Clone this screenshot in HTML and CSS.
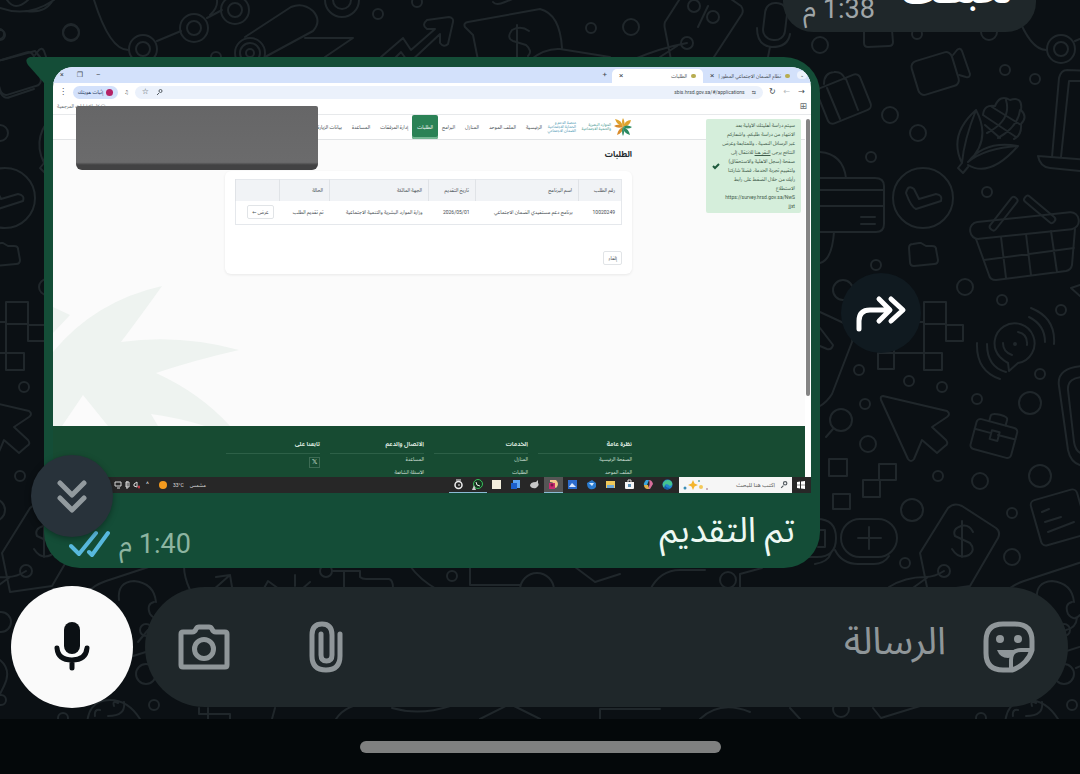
FILE: index.html
```html
<!DOCTYPE html>
<html lang="ar" dir="rtl">
<head>
<meta charset="utf-8">
<meta name="viewport" content="width=device-width, initial-scale=1">
<title>محادثة</title>
<link rel="stylesheet" href="styles.css">
</head>
<body>
<div class="app">
<main class="chat">
<svg class="wallpaper" aria-hidden="true">
<defs>
<g id="doodles">
<!-- nodes, camera, bag, laptop -->
<path d="M1012 0Q1028 51 1047 50M1075 41L1099 31M1125 18L1140 10M1135 0Q1136 8 1128 15"/>
<circle cx="1061" cy="49" r="14"/><circle cx="1061" cy="49" r="7"/>
<circle cx="1112" cy="28" r="14"/><circle cx="1112" cy="28" r="7"/>
<circle cx="1153" cy="10" r="14"/><circle cx="1153" cy="10" r="7"/>
<circle cx="989" cy="32" r="8"/><circle cx="917" cy="34" r="5"/><circle cx="820" cy="45" r="8"/>
<path d="M864 30V43Q864 47 868 47L889 46Q893 46 893 42L892 30"/>
<rect x="914" y="56" width="42" height="35" rx="6" transform="rotate(-17 935 73)"/>
<path d="M953 55L957 50Q960 47 962 51L970 74Q970 78 966 77L959 75"/>
<rect x="821" y="80" width="46" height="38" rx="5" transform="rotate(-22 844 99)"/>
<path d="M827 88L840 119M846 79L858 110M824 84Q824 73 834 72Q842 71 845 79"/>
<circle cx="890" cy="115" r="8"/><circle cx="918" cy="133" r="8"/><circle cx="1005" cy="70" r="5"/><circle cx="1035" cy="79" r="5"/><circle cx="871" cy="157" r="5"/><circle cx="987" cy="192" r="5"/>
<path d="M1090 71L1067 70Q1061 70 1059 78L1052 157M1061 157L1069 81H1090M1038 156L1090 160M1038 156Q1040 167 1050 168L1090 172"/>
<path d="M976 110Q948 135 962 163Q964 140 976 110Q992 140 968 162M962 163L958 168L963 173L968 167M968 165Q990 178 1018 146Q985 140 968 162M968 162Q985 148 1018 146"/>
<path d="M983 115Q984 104 995 106Q1000 94 1010 100Q1023 96 1021 110Q1028 117 1021 124Q1022 135 1014 139M983 115L1016 137M992 107L1021 125M987 133Q1012 120 1006 100M998 138Q1018 127 1020 110M985 125L1000 138"/>
<!-- watch, card, folder, basket -->
<circle cx="923" cy="198" r="30"/>
<path d="M906 193Q908 184 914 189L919 199L936 194Q943 195 941 201L916 209Q911 207 906 193"/>
<path d="M790 178H875Q884 178 884 186V224Q884 232 876 232H790M790 190H884M790 206H884M861 217H875M861 224H875M820 152Q843 154 846 178M834 232Q832 260 820 263"/>
<path d="M909 248Q909 244 913 244L919 243L921 243L926 246H932Q936 246 936 249L938 260Q938 264 934 264L914 266Q910 266 910 262Z"/>
<circle cx="876" cy="265" r="5"/><circle cx="843" cy="290" r="10"/><path d="M848 299L854 309"/>
<circle cx="965" cy="287" r="8"/><circle cx="1002" cy="300" r="5"/><circle cx="1061" cy="310" r="5"/>
<rect x="970" y="217" width="109" height="17" rx="8" transform="rotate(-6 1025 226)"/>
<path d="M976 239L989 275Q990 280 996 280L1066 271Q1071 270 1072 265L1075 229M1001 237L1006 278M1026 234L1031 275M1051 231L1057 272M984 260L1074 248"/>
<rect x="984" y="210" width="40" height="7" rx="3" transform="rotate(-52 1004 214)"/>
<rect x="1021" y="206" width="38" height="7" rx="3" transform="rotate(40 1040 209)"/>
<path d="M1080 285L1071 288L1080 296"/>
<!-- squares and sonar -->
<path d="M924 302H946V324H924ZM946 325H963V341H946ZM924 353H942V370H924ZM878 353H894V369H878ZM893 322H924M894 322V353H924V324"/>
<path d="M1008 363L1009 371L1018 363A20 20 0 1 0 1000 357Q1004 361 1008 363"/>
<circle cx="1015" cy="344" r="1"/><path d="M1018 332Q1028 334 1027 345M1003 343Q1003 352 1012 355M1029 317Q1045 325 1045 342M1031 308Q1056 318 1054 344M987 344Q987 367 1006 372M977 343Q976 371 1000 379"/>
<circle cx="859" cy="370" r="5"/><circle cx="909" cy="381" r="5"/><circle cx="942" cy="387" r="5"/><circle cx="977" cy="399" r="5"/><circle cx="865" cy="404" r="5"/><circle cx="1040" cy="374" r="5"/><circle cx="1030" cy="403" r="11"/><circle cx="841" cy="420" r="11"/><path d="M833 429L826 437"/>
<path d="M820 312L848 325Q854 330 852 342L832 394Q827 402 820 406M820 328L833 345Q832 350 827 349L820 346"/>
<path d="M883 396L947 411Q951 414 947 417L932 427L946 440Q949 444 945 446L937 453L922 440L914 459Q911 463 908 459L881 400Q880 396 883 396Z"/>
<g transform="rotate(15 994 438)"><rect x="973" y="423" width="42" height="31" rx="4"/><path d="M985 423V417Q986 414 994 414Q1002 414 1002 417V423M973 434H990M997 434H1015M990 431H998V440H990Z"/></g>
<path d="M1085 366Q1056 367 1059 386L1068 450Q1071 465 1085 466M1085 377Q1067 377 1068 390L1074 442Q1076 454 1085 454"/>
<!-- tags, pills, paper -->
<circle cx="868" cy="444" r="8"/><circle cx="938" cy="476" r="5"/><circle cx="980" cy="481" r="8"/><circle cx="1040" cy="476" r="11"/><circle cx="912" cy="510" r="11"/><circle cx="1012" cy="513" r="5"/><circle cx="1012" cy="557" r="8"/><circle cx="905" cy="563" r="5"/>
<path d="M829 459H847V476H829ZM879 464H896V480H879ZM863 480H880V497H863ZM833 494H850V509H833Z"/>
<rect x="841" y="519" width="56" height="38" rx="19"/><path d="M869 527V549M858 538H881M835 550Q842 564 858 564H874Q884 564 889 556"/>
<path d="M800 519H817Q836 519 836 538Q836 557 817 557H800M815 564Q828 562 831 553M818 530H825V547H818"/>
<path d="M948 508Q954 502 962 506L996 528Q1001 532 998 538L970 586L928 592L920 553ZM889 587Q905 577 925 577Q935 577 944 571M928 577L910 590"/>
<circle cx="944" cy="571" r="6"/><path d="M973 532Q969 524 961 526Q952 529 955 536L970 543Q976 550 969 555Q959 560 952 549M962 521V557"/>
<rect x="1035" y="494" width="48" height="47" rx="5" transform="rotate(-16 1059 517)"/><path d="M1042 512L1049 509M1045 522L1061 517M1048 532L1074 522"/>
<path d="M1100 556L1024 581Q1010 586 1007 592M1037 600Q1035 582 1052 581Q1072 583 1074 602M1072 602Q1064 604 1068 614Q1074 622 1080 615M1077 618Q1076 628 1066 630L1056 642M1045 658L1095 642M1076 668L1085 664"/>
<circle cx="1064" cy="630" r="6"/><circle cx="1064" cy="674" r="10"/><circle cx="919" cy="622" r="10"/><circle cx="1072" cy="705" r="5"/>
<path d="M918 660Q930 670 922 686L915 700M1005 730Q1004 700 1028 700Q1046 700 1058 719M1013 716Q1012 709 1018 710M1032 706Q1030 700 1036 703M1026 716Q1044 716 1042 702"/><circle cx="981" cy="718" r="5"/><circle cx="919" cy="700" r="5"/><circle cx="841" cy="709" r="8"/>
</g>
</defs>
<g class="doodle-lines">
<use href="#doodles"/><use href="#doodles" x="-918"/>
<path d="M0 8Q28 18 54 0M26 11Q45 14 53 0M7 0Q15 12 28 0"/>
<circle cx="71" cy="33" r="8"/><circle cx="0" cy="35" r="5"/>
<path d="M2 60L35 51L40 57M0 92Q4 100 10 97L34 89"/>
<path d="M245 37L291 7Q303 2 313 11Q322 21 313 31L265 57M305 38H353L325 57"/><circle cx="250" cy="53" r="15"/><circle cx="250" cy="53" r="10"/><circle cx="250" cy="53" r="4"/>
<circle cx="342" cy="0" r="17"/><circle cx="342" cy="0" r="9"/><circle cx="378" cy="14" r="5"/><circle cx="417" cy="2" r="5"/><circle cx="216" cy="57" r="5"/>
<path d="M381 57L403 38L411 50L435 29L427 29Q421 25 427 20L449 17Q454 18 453 22L448 44Q444 48 440 43L440 34L409 63L401 52L393 60"/>
<path d="M478 60L473 35L465 27Q463 23 468 22L540 9M493 2Q496 6 505 2L520 -4M540 9Q560 14 562 48M530 60Q545 48 560 49L610 57"/>
<path d="M529 31Q521 25 512 30Q506 38 513 41L526 45Q533 51 528 56M517 25V58"/>
<circle cx="591" cy="28" r="5"/><circle cx="631" cy="27" r="8"/>
<path d="M681 -3L665 22Q664 25 665 29L671 60M728 -3L741 6Q744 10 742 14L712 60M632 60Q660 48 687 43M698 27L708 6M660 57L677 46"/><circle cx="694" cy="6" r="6"/><circle cx="713" cy="17" r="6"/><circle cx="687" cy="43" r="6"/>
<rect x="764" y="3" width="22" height="37" rx="10" transform="rotate(7 775 22)"/><path d="M757 28Q757 46 772 47Q788 47 790 34M770 47L768 57"/>
<path d="M184 566Q184 577 190 590M213 590L230 575L216 577M230 575L232 587M263 590L268 581L279 589M295 575V586M310 582L302 589M332 571H360V577Q362 579 366 579H389Q393 580 393 588M344 571V590M410 566Q420 580 438 590M470 566V585H520M520 590A17 17 0 0 1 554 590M575 567L595 582L620 574M650 590Q660 570 680 570H705M740 590V574L762 568"/><circle cx="326" cy="571" r="6"/><circle cx="452" cy="576" r="5"/><circle cx="728" cy="580" r="8"/>
<path d="M199 708V714H230V719M208 708V719M275 708L272 719M336 719Q346 704 370 703M392 708Q420 716 450 706M480 719L510 704L540 719M600 719V709H660M700 719Q720 700 750 712M790 708L800 719M873 708L881 718L920 706"/>
</g>
</svg>

<article class="bubble-in">
<p class="in-text">لحبطت</p>
<time class="time">1:38 م</time>
</article>

<div class="row-out">
<button class="forward" type="button" aria-label="إعادة توجيه">
<svg width="52" height="40" viewBox="0 0 52 40"><path d="M4 36V28Q4 17 15 17H34M24 6L35 17L24 28M36 6L48 17L36 28" fill="none" stroke="#fff" stroke-width="5" stroke-linecap="round" stroke-linejoin="round"/></svg>
</button>
<article class="bubble-out">
<svg class="tail" width="30" height="28" viewBox="0 0 30 28" aria-hidden="true"><path d="M30 0H4Q-2 2 2 8L18 26L30 28Z" fill="#144d37"/></svg>
<section class="shot">
<header class="tabs">
<span class="tab-menu">⌄</span>
<span class="tab tab-idle"><i class="fav"></i>نظام الضمان الاجتماعي المطور |<b>×</b></span>
<span class="tab tab-active"><i class="fav"></i>الطلبات<b>×</b></span>
<span class="tab-plus">+</span>
<span class="win-buttons"><i>–</i><i>❐</i><i>×</i></span>
</header>
<div class="toolbar">
<span class="navs"><i>→</i><i class="dim">←</i><i>↻</i></span>
<div class="address"><i>⇆</i><span dir="ltr">sbis.hrsd.gov.sa/#/applications</span><svg class="address-end" width="7" height="7" viewBox="0 0 7 7" aria-hidden="true"><path d="M1 6L3 4M3 2A1.500 1.500 0 1 0 6 2A1.500 1.500 0 1 0 3 2" fill="none" stroke="#555c62"/></svg><i class="star">☆</i></div>
<i>♫</i>
<span class="profile"><i></i>إثبات هويتك</span>
<i class="dots">⋮</i>
</div>
<div class="bookmarks"><span>⊞</span><span>▢ كل الإشارات المرجعية</span></div>
<div class="viewport">
<div class="scrollbar"><i></i></div>
<div class="site">
<header class="site-head">
<svg width="18" height="18" viewBox="0 0 18 18" aria-hidden="true"><g fill="#dfa32f"><path d="M9 9Q3 7 1 1Q8 2 9 9"/><path d="M9 9Q7 4 9 0Q12 5 9 9"/><path d="M9 9Q11 2 17 2Q16 8 9 9"/></g><path d="M9 9Q5 5 0 8Q4 11 9 9Q4 11 3 17Q9 15 9 9" fill="#d98b2b"/><g fill="#2b8a62"><path d="M9 9Q13 6 18 9Q14 12 9 9"/><path d="M9 9Q15 11 16 17Q9 15 9 9"/><path d="M9 9Q11 14 9 18Q7 13 9 9"/></g></svg>
<span class="brand">الموارد البشرية<br>والتنمية الاجتماعية</span>
<span class="brand brand-second">منصة الدعم و<br>الحماية الاجتماعية<br>الضمان الاجتماعي</span>
<nav class="site-nav"><a href="#">الرئيسية</a><a href="#">الملف الموحد</a><a href="#">المنازل</a><a href="#">البرامج</a><a href="#" class="current">الطلبات</a><a href="#">إدارة المرفقات</a><a href="#">المساعدة</a><a href="#">بيانات الزيارة</a></nav>
</header>
<div class="site-body">
<svg class="palm" width="188" height="140" viewBox="53 286 188 140" aria-hidden="true"><path fill="#eef3f0" d="M53 352Q95 301 162 286Q145 310 121 342Q180 334 239 350Q195 360 156 373Q200 393 230 426H205Q180 418 151 414L158 426H108L83 395L62 426H53ZM53 307L70 315L53 333Z"/></svg>
<h1>الطلبات</h1>
<div class="card">
<table>
<thead><tr><th class="c1">رقم الطلب</th><th class="c2">اسم البرنامج</th><th class="c3">تاريخ التقديم</th><th class="c4">الجهة المالكة</th><th class="c5">الحالة</th><th class="c6"></th></tr></thead>
<tbody><tr><td>10020249</td><td>برنامج دعم مستفيدي الضمان الاجتماعي</td><td>2026/05/01</td><td>وزارة الموارد البشرية والتنمية الاجتماعية</td><td>تم تقديم الطلب</td><td><button type="button">عرض ←</button></td></tr></tbody>
</table>
<button type="button" class="cancel">إلغاء</button>
</div>
<aside class="notice">
<p>سيتم دراسة أهليتك الأولية بعد<br>الانتهاء من دراسة طلبكم، واشعاركم<br>عبر الرسائل النصية ، وللمتابعة وعرض<br>النتائج يرجى <a href="#">النقر هنا</a> للانتقال إلى<br>صفحة (سجل الأهلية والاستحقاق)<br>ولتقييم تجربة الخدمة، فضلاً شاركنا<br>رأيك من خلال الضغط على رابط<br>الاستطلاع<br>https://survey.hrsd.gov.sa/NwS<br>jjxt</p>
<svg width="8" height="8" viewBox="0 0 8 8" aria-hidden="true"><path d="M1 4L3 6L7 2" fill="none" stroke="#1d5a3c" stroke-width="2"/></svg>
</aside>
</div>
<footer class="site-foot">
<div><h2>نظرة عامة</h2><a href="#">الصفحة الرئيسية</a><a href="#">الملف الموحد</a></div>
<div><h2>الخدمات</h2><a href="#">المنازل</a><a href="#">الطلبات</a></div>
<div><h2>الاتصال والدعم</h2><a href="#">المساعدة</a><a href="#">الأسئلة الشائعة</a></div>
<div><h2>تابعنا على</h2><a href="#" class="x-link">𝕏</a></div>
</footer>
</div>
</div>
<div class="taskbar">
<svg class="start" width="8" height="8" viewBox="0 0 8 8" aria-hidden="true"><path fill="#fff" d="M0 1L3 .6V3.7H0ZM4 .5L8 0V3.7H4ZM0 4.3H3V7.4L0 7ZM4 4.3H8V8L4 7.5Z"/></svg>
<div class="search"><svg width="8" height="8" viewBox="0 0 7 7" aria-hidden="true"><path d="M1 6L3 4M3 2A1.500 1.500 0 1 0 6 2A1.500 1.500 0 1 0 3 2" fill="none" stroke="#555c62"/></svg><span>اكتب هنا للبحث</span>
<svg class="sparkles" width="26" height="12" viewBox="0 0 26 12" aria-hidden="true"><path fill="#f4b52c" d="M10 1L11.500 4.500L15 6L11.500 7.500L10 11L8.500 7.500L5 6L8.500 4.500Z"/><circle cx="18" cy="8" r="2" fill="#f4c95a"/><circle cx="2" cy="9" r="1.500" fill="#3a8db5"/><circle cx="16" cy="2" r="1" fill="#6aa"/><circle cx="24" cy="10" r="1" fill="#b9a"/></svg></div>
<div class="apps">
<span><svg viewBox="0 0 11 11"><circle cx="5.500" cy="5.500" r="5" fill="#2386cf"/><path d="M1 4Q4-1 9 2Q12 6 8 7Q6 5 4 5Q2 6 4 10Q0 8 1 4" fill="#46c48f"/><path d="M3 6Q4 9 8 9Q5 12 2 9Z" fill="#145ea8"/></svg></span>
<span><svg viewBox="0 0 11 11"><path d="M3 1H6L4 6H1Q0 5 3 1" fill="#39a5dc"/><path d="M6 1Q9 1 10 5L7 10H4Q8 6 6 1" fill="#d86e9c"/><path d="M1 6H5L6 10H4Q1 9 1 6" fill="#e0b04a"/></svg></span>
<span><svg viewBox="0 0 11 11"><path d="M1 3H10V9Q10 10 9 10H2Q1 10 1 9Z" fill="#f5f5f5"/><path d="M4 3V1H7V3" fill="none" stroke="#ddd"/><path d="M4 5H7V8H4Z" fill="#5a8fb5"/></svg></span>
<span><svg viewBox="0 0 11 11"><path d="M1 2H10V9H1Z" fill="#f0c85a"/><path d="M2 6H9V9H2Z" fill="#6ea8d8"/></svg></span>
<span><svg viewBox="0 0 11 11"><path d="M1 4L6 1L10 4V8Q8 11 4 10Q1 9 1 4" fill="#2b7cd0"/><path d="M3 4H8L6 7Z" fill="#d7ecff"/></svg></span>
<span><svg viewBox="0 0 11 11"><path d="M1 1H10V10H1Z" fill="#2c6cce"/><path d="M2 8L5 4L9 8Z" fill="#dbe9ff"/></svg></span>
<span class="open active"><svg viewBox="0 0 11 11"><path d="M2 1H8Q12 5 8 9L6 8Q7 3 2 3Z" fill="#f4c58a"/><path d="M1 4H7V10H1Z" fill="#c72c70"/><circle cx="4" cy="6" r="1.500" fill="#7b1748"/></svg></span>
<span><svg viewBox="0 0 11 11"><path d="M1 7Q1 3 7 3L9 1V4Q11 6 7 9Q3 10 1 7" fill="#c8c8c8"/></svg></span>
<span><svg viewBox="0 0 11 11"><path d="M3 1H10V9H3Z" fill="#5ea4f2"/><path d="M1 4H7V10H1Z" fill="#1b5fcc"/></svg></span>
<span><svg viewBox="0 0 11 11"><path d="M1 1H10V10H1Z" fill="#f3eedd"/></svg></span>
<span class="open"><svg viewBox="0 0 11 11"><circle cx="6" cy="5" r="4.500" fill="#16301f" stroke="#38c25c"/><path d="M4 3Q4 7 8 7" fill="none" stroke="#eee"/><path d="M0 11L2 6L4 11Z" fill="#ccc"/></svg></span>
<span class="open"><svg viewBox="0 0 11 11"><circle cx="5.500" cy="6" r="3.500" fill="none" stroke="#eee" stroke-width="1.500"/><path d="M3 1H8M5 6H7" stroke="#eee"/></svg></span>
</div>
<div class="weather"><span>مشمس</span><span dir="ltr">33°C</span><i></i><b>^</b></div>
<svg width="26" height="8" viewBox="0 0 26 8" aria-hidden="true" fill="none" stroke="#ddd"><path d="M1 1H7V5H1ZM3 7H6M12 1H15V6H12ZM13 0V8M20 3L23 1V6L20 5Z"/><circle cx="25" cy="6" r="1" stroke="#e45"/></svg>
</div>
<div class="redacted"></div>
</section>
<div class="caption"><p>تم التقديم</p>
<div class="meta"><time class="time">1:40 م</time><svg width="42" height="28" viewBox="0 0 42 28" aria-label="مقروءة"><path d="M2 16L10 24L27 3M20 22L23 25L39 3" fill="none" stroke="#58b8dd" stroke-width="4" stroke-linecap="round" stroke-linejoin="round"/></svg></div></div>
<button class="scroll-down" type="button" aria-label="الانتقال إلى الأسفل"><svg width="32" height="34" viewBox="0 0 32 34"><path d="M4 4L16 16L28 4M4 19L16 31L28 19" fill="none" stroke="#929a9e" stroke-width="5" stroke-linecap="round" stroke-linejoin="round"/></svg></button>
</article>
</div>

<form class="composer">
<div class="field">
<button type="button" aria-label="ملصقات"><svg width="52" height="52" viewBox="0 0 52 52"><path d="M20 3H32Q49 3 49 20V29Q47 36 42 41Q36 47 29 49H20Q3 49 3 32V20Q3 3 20 3Z" fill="none" stroke="#8f9699" stroke-width="5"/><circle cx="17" cy="18" r="4" fill="#8f9699"/><circle cx="35" cy="18" r="4" fill="#8f9699"/><path d="M14 29H32Q30 37 25 37Q17 37 14 29Z" fill="#8f9699"/><path d="M28 49V39Q28 29 38 29H49" fill="none" stroke="#8f9699" stroke-width="4"/></svg></button>
<input type="text" placeholder="الرسالة" aria-label="الرسالة">
<button type="button" aria-label="إرفاق"><svg width="34" height="52" viewBox="0 0 34 52"><path d="M31 13V35Q31 49 17 49Q3 49 3 35V14Q3 3 13 3Q23 3 23 14V34Q23 40 17.500 40Q12 40 12 34V13" fill="none" stroke="#8f9699" stroke-width="5" stroke-linecap="round"/></svg></button>
<button type="button" aria-label="الكاميرا"><svg width="52" height="46" viewBox="0 0 52 46"><path d="M5 8H14Q17 8 18 5Q19 3 21 3H31Q33 3 34 5Q35 8 38 8H47Q49 8 49 10V41Q49 43 47 43H5Q3 43 3 41V10Q3 8 5 8Z" fill="none" stroke="#8f9699" stroke-width="5"/><circle cx="26" cy="25" r="9.500" fill="none" stroke="#8f9699" stroke-width="5"/></svg></button>
</div>
<button class="mic" type="button" aria-label="تسجيل صوتي"><svg width="36" height="50" viewBox="0 0 36 50"><rect x="10" y="0" width="16" height="32" rx="8" fill="#0b1014"/><path d="M3 26Q4 38 18 38Q32 38 33 26M18 38V46" fill="none" stroke="#0b1014" stroke-width="5" stroke-linecap="round"/></svg></button>
</form>
</main>
<div class="gesture-bar"><span></span></div>
</div>
</body>
</html>
```
FILE: styles.css
```css
* { box-sizing: border-box; }
body, p, h1, h2 { margin: 0; }
body { background: #04080a; font-family: Roboto, "Noto Sans Arabic", "DejaVu Sans", sans-serif; }
button { border: 0; padding: 0; background: none; font: inherit; color: inherit; }
svg { display: block; flex: none; }
a { color: inherit; text-decoration: none; }
i, b { font-style: normal; font-weight: 400; }

.app { min-height: 100vh; display: flex; flex-direction: column; }
.chat { position: relative; flex: 1; display: flex; flex-direction: column; background: #0b1014; overflow: hidden; padding-bottom: 11px; }
.wallpaper { position: absolute; inset: 0; width: 100%; height: 100%; }
.doodle-lines { fill: none; stroke: #20272b; stroke-width: 2; stroke-linejoin: round; stroke-linecap: round; }

.bubble-in { position: relative; align-self: flex-start; display: flex; align-items: flex-end; justify-content: space-between; width: 253px; height: 32px; margin-right: 44px; padding: 0 24px 7px 20px; background: #1f272a; border-radius: 0 0 30px 30px; }
.in-text { color: #fff; font-size: 34px; line-height: 40px; font-weight: 700; padding-bottom: 14px; }
.time { font-size: 27px; line-height: 32px; color: #a0a6a8; }

.row-out { position: relative; display: flex; align-items: center; gap: 21px; margin-top: 25px; padding: 0 159px 0 44px; }
.forward { flex: none; width: 80px; height: 80px; border-radius: 50%; background: #101a20; display: grid; place-items: center; }
.bubble-out { position: relative; flex: 1; min-width: 0; background: #144d37; border-radius: 0 36px 36px 36px; padding: 10px 9px 8px; }
.tail { position: absolute; left: -18px; top: 0; }
.caption { display: flex; justify-content: space-between; align-items: flex-end; padding: 9px 16px 0; }
.caption p { color: #edf8f2; font-size: 35px; line-height: 58px; }
.meta { display: flex; align-items: center; gap: 8px; }
.meta .time { color: #8db5a1; }
.scroll-down { position: absolute; left: -13px; bottom: 31px; width: 82px; height: 82px; border-radius: 50%; background: #28323a; box-shadow: 0 2px 6px rgba(0, 0, 0, .35); display: grid; place-items: center; }

.composer { position: relative; display: flex; align-items: center; gap: 12px; margin-top: auto; padding: 0 12px 0 11px; }
.field { flex: 1; display: flex; align-items: center; height: 120px; padding: 0 33px; border-radius: 60px; background: #1f272a; }
.field input { flex: 1; min-width: 0; height: 80px; margin: 0 37px 12px 0; padding: 0; border: 0; background: none; outline: 0; color: #dfe4e6; font: inherit; font-size: 38px; }
.field input::placeholder { color: #8f9699; opacity: 1; }
.field button + button { margin-right: 79px; }
.mic { flex: none; width: 122px; height: 122px; border-radius: 50%; background: #fafafa; display: grid; place-items: center; }
.gesture-bar { height: 55px; display: flex; justify-content: center; align-items: center; background: #04080a; }
.gesture-bar span { width: 361px; height: 12px; border-radius: 6px; background: #7f8080; }

.shot { position: relative; border-radius: 20px 20px 0 0; overflow: hidden; background: #fff; color: #444b50; font-size: 5px; line-height: 8px; }
.tabs { display: flex; align-items: center; height: 16px; padding: 0 4px 0 7px; background: #d3e1fb; }
.tab-menu { width: 10px; text-align: center; background: #eef3fd; border-radius: 4px; }
.tab { display: flex; align-items: center; gap: 4px; height: 14px; padding: 0 7px; align-self: flex-end; }
.tab b { margin-right: auto; font-size: 8px; }
.tab-idle { width: 94px; }
.tab-active { width: 91px; background: #fff; border-radius: 5px 5px 0 0; }
.fav { width: 5px; height: 4px; border-radius: 2px; background: #b8ad50; }
.tab-plus { margin-right: 5px; font-size: 8px; }
.win-buttons { margin-right: auto; display: flex; gap: 13px; font-size: 7px; }
.toolbar { display: flex; align-items: center; gap: 6px; height: 18px; padding: 0 6px; }
.navs { display: flex; gap: 8px; font-size: 8px; }
.dim { color: #b5b9bd; }
.address { flex: 1; display: flex; align-items: center; gap: 7px; height: 13px; padding: 0 7px 0 7px; border-radius: 7px; background: #ebf1fb; }
.address-end { margin-right: auto; }
.star { font-size: 8px; }
.profile { display: flex; align-items: center; gap: 3px; height: 13px; padding: 0 5px; border-radius: 7px; background: #d3e1fb; color: #26395d; }
.profile i { width: 7px; height: 7px; border-radius: 50%; background: #b52265; }
.dots { font-size: 8px; }
.bookmarks { display: flex; justify-content: space-between; height: 13px; padding: 1px 4px; color: #686e72; }
.bookmarks span:first-child { font-size: 9px; }

.viewport { display: flex; border-top: 1px solid #e7e9eb; }
.site { flex: 1; min-width: 0; }
.scrollbar { width: 6px; background: #fff; padding-top: 4px; }
.scrollbar i { display: block; width: 4px; height: 277px; margin: auto; border-radius: 2px; background: #858585; }
.site-head { display: flex; align-items: center; gap: 3px; height: 25px; padding-right: 173px; border-bottom: 1px solid #e2e4e6; background: #fff; }
.brand { width: 32px; font-size: 4px; line-height: 4px; color: #3b918a; white-space: nowrap; }
.brand-second { width: 28px; color: #4794b0; }
.site-nav { display: flex; align-items: center; height: 100%; gap: 10px; margin-right: 3px; white-space: nowrap; }
.site-nav .current { height: 24px; margin: 0 -6px; padding: 8px 5px; border-radius: 2px; background: #2b8256; color: #fff; box-shadow: inset 0 -2px #73b692; }
.site-body { position: relative; height: 286px; padding: 8px 173px 0 172px; background: #fbfbfb; }
.palm { position: absolute; left: 0; bottom: 0; }
.site-body h1 { position: relative; font-size: 8px; line-height: 14px; color: #20262a; }
.card { position: relative; margin-top: 9px; height: 103px; padding: 8px 10px 8px 11px; border-radius: 6px; background: #fff; box-shadow: 0 1px 3px rgba(0, 0, 0, .08); }
.card table { width: 100%; table-layout: fixed; border-collapse: collapse; border: 1px solid #e5e8ec; }
.card th { height: 21px; background: #f1f3f6; border-left: 1px solid #e0e3e7; font-weight: 400; text-align: right; padding: 0 6px; }
.card td { height: 24px; padding: 0 6px; font-size: 5px; white-space: nowrap; }
.c1 { width: 43px; }
.c2 { width: 103px; }
.c3 { width: 47px; }
.c4 { width: 99px; }
.c5 { width: 50px; }
.c6 { width: 44px; }
.card button { padding: 2px 4px; border: 1px solid #e1e4e7; border-radius: 2px; background: #fff; }
.card .cancel { display: block; margin-top: 26px; }
.notice { position: absolute; right: 4px; top: -21px; width: 95px; display: flex; align-items: center; justify-content: space-between; padding: 2px 6px; background: #d5eedb; border-radius: 2px; color: #3f5a49; white-space: nowrap; }
.notice p { width: 74px; line-height: 9px; }
.notice a { text-decoration: underline; }
.site-foot { display: grid; grid-template-columns: repeat(4, 1fr); column-gap: 10px; height: 51px; padding: 12px 173px 0; background: #174b32; color: #d6e3dc; overflow: hidden; }
.site-foot h2 { font-size: 6px; line-height: 12px; margin-bottom: 1px; padding-bottom: 3px; border-bottom: 1px solid #2d6047; }
.site-foot a { display: block; margin-bottom: 5px; line-height: 8px; }
.site-foot .x-link { width: 11px; height: 11px; margin-top: 3px; line-height: 9px; text-align: center; border: 1px solid #3d6b54; font-size: 7px; }
.taskbar { display: flex; align-items: center; height: 16px; padding: 0 6px 0 61px; background: #272727; color: #ddd; }
.search { display: flex; align-items: center; gap: 5px; width: 113px; height: 16px; margin-right: 5px; padding: 0 4px; background: #f6f6f6; color: #5a5a5a; font-size: 6px; }
.sparkles { margin-right: auto; }
.apps { display: flex; margin-right: 2px; }
.apps span { width: 19px; height: 16px; padding: 2px 4px; }
.apps svg { width: 11px; height: 11px; }
.open { border-bottom: 1px solid #8abbd4; }
.apps .active { background: #555; }
.weather { display: flex; align-items: center; gap: 6px; margin-right: auto; margin-left: 6px; }
.weather i { width: 8px; height: 8px; border-radius: 50%; background: #f39a1e; }
.weather b { margin-right: 4px; font-size: 7px; }
.redacted { position: absolute; left: 23px; top: 39px; width: 242px; height: 64px; border-radius: 2px 2px 6px 6px; background: linear-gradient(#666667, #6b6b6c 88%, #424243 92%); }
```
